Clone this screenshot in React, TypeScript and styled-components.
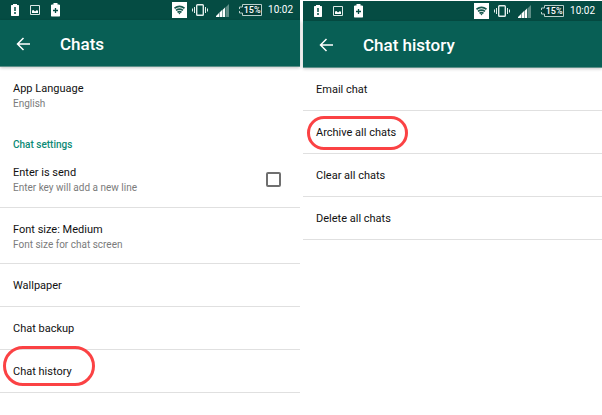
import React from "react";
import styled, { createGlobalStyle } from "styled-components";

const GlobalStyle = createGlobalStyle`
  * { box-sizing: border-box; }
  body {
    margin: 0;
    background: #fff;
    color: #111;
    font-family: Roboto, "Liberation Sans", sans-serif;
  }
  button, input { font: inherit; margin: 0; }
`;

const Screens = styled.main`
  display: grid;
  grid-template-columns: 300fr 299fr;
  column-gap: 3px;
  align-items: start;
`;

const Screen = styled.section<{ $drop?: boolean }>`
  min-width: 0;
  padding-top: ${(p) => (p.$drop ? "1px" : "0")};
`;

const StatusBar = styled.div`
  display: flex;
  align-items: center;
  justify-content: space-between;
  height: 20px;
  padding: 0 7px 0 11px;
  background: #054c43;
  color: #fff;
`;

const Notifications = styled.div`
  display: flex;
  align-items: center;
  gap: 11px;
`;

const SystemIcons = styled.div`
  display: flex;
  align-items: center;
`;

const Icon = styled.svg<{ $gap?: number }>`
  display: block;
  flex: none;
  margin-right: ${(p) => p.$gap ?? 0}px;
`;

const BatteryLevel = styled.span`
  position: relative;
  display: block;
  margin-right: 6px;
  font-size: 9px;
  font-weight: 500;
  line-height: 12px;
`;

const BatteryText = styled.span`
  position: absolute;
  inset: 0 0 0 3px;
  text-align: center;
`;

const Clock = styled.time`
  font-size: 10px;
  line-height: 14px;
`;

const AppBar = styled.header`
  position: relative;
  display: flex;
  align-items: center;
  height: 47px;
  padding: 1px 16px 0;
  gap: 29px;
  background: #085f55;
  border-bottom: 1px solid #5c8f88;
  box-shadow: 0 1px 3px rgba(0, 0, 0, 0.22);
  color: #fff;
`;

const BackButton = styled.button`
  display: block;
  padding: 0;
  border: 0;
  background: none;
  color: inherit;
  cursor: pointer;
`;

const Title = styled.h1`
  margin: 0;
  font-size: 17px;
  font-weight: 500;
  line-height: 24px;
`;

const List = styled.ul`
  margin: 0;
  padding: 0;
  list-style: none;
`;

const Item = styled.li<{ $tall?: boolean; $plain?: boolean }>`
  position: relative;
  display: flex;
  height: ${(p) => (p.$tall ? 56 : 43)}px;
  border-bottom: 1px solid ${(p) => (p.$plain ? "transparent" : "#e0e0e0")};
`;

const RowButton = styled.button`
  flex: 1;
  padding: 2px 13px 0;
  border: 0;
  background: none;
  color: inherit;
  text-align: left;
  cursor: pointer;
`;

const RowLabel = styled.label`
  flex: 1;
  display: flex;
  align-items: center;
  justify-content: space-between;
  padding: 0 19px 0 13px;
  cursor: pointer;
`;

const Name = styled.span`
  display: block;
  font-size: 11px;
  line-height: 16px;
`;

const Detail = styled.span`
  display: block;
  color: #7b7b7b;
  font-size: 10px;
  line-height: 13px;
`;

const SectionTitle = styled.h2`
  margin: 0;
  padding: 15px 13px 0;
  height: 29px;
  color: #0b8a75;
  font-size: 10px;
  font-weight: 500;
  line-height: 14px;
`;

const Checkbox = styled.input`
  appearance: none;
  width: 15px;
  height: 15px;
  border: 2px solid #6f6f6f;
  border-radius: 2px;
  background: #fff;
  &:checked { background: #0b8a75; }
`;

const Ring = styled.span<{ $x: number; $y: number; $w: number; $h: number }>`
  position: absolute;
  z-index: 1;
  left: ${(p) => p.$x}px;
  top: ${(p) => p.$y}px;
  width: ${(p) => p.$w}px;
  height: ${(p) => p.$h}px;
  border: 3px solid #fb4244;
  border-radius: 20px;
  pointer-events: none;
`;

function PhoneStatus() {
  return (
    <StatusBar>
      <Notifications>
        <Icon width="8" height="12" viewBox="0 0 8 12">
          <path fill="#fff" d="M2 0h4v1h1.500l.5.500v10l-.5.500h-7l-.5-.5v-10l.5-.5H2z" />
          <path fill="#427b73" d="M3 3h2v4H3zM3 8h2v2H3z" />
        </Icon>
        <Icon width="10" height="10" viewBox="0 0 10 10">
          <path fill="none" stroke="#dce8e6" d="M.5.5h9v9h-9z" />
          <path fill="#fff" d="M2 8V5.500l1.500-.5L5 6.500 7 5l1 1v2z" />
        </Icon>
        <Icon width="9" height="14" viewBox="0 0 9 14">
          <path fill="#fff" d="M2.500 0h4v1.500H8l1 .5v11l-.5.500h-8L0 13V2l1-.5h1.500z" />
          <path fill="none" stroke="#054c43" strokeWidth="1.300" d="M4.500 5v5M2 7.500h5" />
        </Icon>
      </Notifications>
      <SystemIcons>
        <Icon $gap={5} width="15" height="16" viewBox="0 0 15 16">
          <path fill="#fff" d="M0 0h15v16H0z" />
          <g fill="none" stroke="#17594f" strokeWidth="1.700">
            <path d="M2.500 6.200q5-3.800 10 0M4 8.400q3.500-2.600 7 0M5.500 10.400q2-1.500 4 0" />
          </g>
          <path fill="#17594f" d="M6.300 10.800h2.400L7.500 12.500z" />
        </Icon>
        <Icon $gap={8} width="16" height="12" viewBox="0 0 16 12">
          <g fill="none" stroke="#e4eeec">
            <rect x="4.700" y=".7" width="6.600" height="10.600" rx=".8" strokeWidth="1.400" />
            <path d="M2.500 3v6M.5 4.500v3M13.500 3v6M15.500 4.500v3" />
          </g>
        </Icon>
        <Icon $gap={10} width="13" height="13" viewBox="0 0 13 13">
          <path fill="#fff" d="M0 13v-1l3-3v4zM3.500 13V8.500L6 6v7zM6.500 13V6L9 3.500V13z" />
          <path fill="#5e8d86" d="M9.500 13V3.500L13 0v13z" />
        </Icon>
        <BatteryLevel>
          <Icon width="23" height="12" viewBox="0 0 23 12">
            <path fill="#033c35" stroke="#b9cfcb" d="M3.500.5h19v11h-19V9h-3V3h3z" />
            <path stroke="#054c43" strokeWidth="2" d="M.5 5v2" />
          </Icon>
          <BatteryText>15%</BatteryText>
        </BatteryLevel>
        <Clock>10:02</Clock>
      </SystemIcons>
    </StatusBar>
  );
}

function Header({ title }: { title: string }) {
  return (
    <AppBar>
      <BackButton type="button" aria-label="Back">
        <Icon width="15" height="14" viewBox="0 0 15 14">
          <path fill="none" stroke="#fff" strokeWidth="1.500" d="M14 7H1.500M7.500 1l-6 6 6 6" />
        </Icon>
      </BackButton>
      <Title>{title}</Title>
    </AppBar>
  );
}

type RowProps = {
  name: string;
  detail?: string;
  plain?: boolean;
  children?: React.ReactNode;
};

function Row({ name, detail, plain, children }: RowProps) {
  return (
    <Item $tall={!!detail} $plain={plain}>
      <RowButton type="button">
        <Name>{name}</Name>
        {detail && <Detail>{detail}</Detail>}
      </RowButton>
      {children}
    </Item>
  );
}

export default function App() {
  return (
    <>
      <GlobalStyle />
      <Screens>
        <Screen>
          <PhoneStatus />
          <Header title="Chats" />
          <List>
            <Row name="App Language" detail="English" plain />
          </List>
          <SectionTitle>Chat settings</SectionTitle>
          <List>
            <Item $tall>
              <RowLabel>
                <span>
                  <Name>Enter is send</Name>
                  <Detail>Enter key will add a new line</Detail>
                </span>
                <Checkbox type="checkbox" />
              </RowLabel>
            </Item>
            <Row name="Font size: Medium" detail="Font size for chat screen" />
            <Row name="Wallpaper" />
            <Row name="Chat backup" />
            <Row name="Chat history">
              <Ring $x={3} $y={-4} $w={92} $h={40} />
            </Row>
          </List>
        </Screen>
        <Screen $drop>
          <PhoneStatus />
          <Header title="Chat history" />
          <List>
            <Row name="Email chat" />
            <Row name="Archive all chats">
              <Ring $x={4} $y={5} $w={101} $h={34} />
            </Row>
            <Row name="Clear all chats" />
            <Row name="Delete all chats" />
          </List>
        </Screen>
      </Screens>
    </>
  );
}
